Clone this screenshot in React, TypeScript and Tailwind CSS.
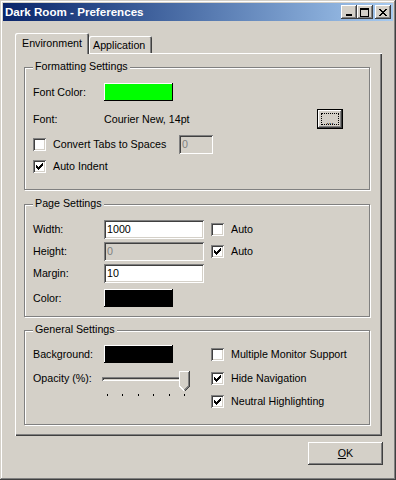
import type { ReactNode } from 'react';

// classic win2k bevels
const raised = 'shadow-[inset_-1px_-1px_#404040,inset_1px_1px_#ffffff,inset_-2px_-2px_#808080,inset_2px_2px_#d4d0c8]';
const sunken = 'shadow-[inset_1px_1px_#808080,inset_-1px_-1px_#ffffff,inset_2px_2px_#404040,inset_-2px_-2px_#d4d0c8]';

function Px({ rows, w, h }: { rows: number[][][]; w: number; h: number }) {
  // rows[y] = list of [x0, x1] runs
  return (
    <svg width={w} height={h} viewBox={`0 0 ${w} ${h}`} shapeRendering="crispEdges">
      {rows.map((runs, y) =>
        runs.map(([a, b], i) => <rect key={`${y}-${i}`} x={a} y={y} width={b - a + 1} height={1} fill="#000" />)
      )}
    </svg>
  );
}

const CHECK = [[[6, 6]], [[5, 6]], [[0, 0], [4, 6]], [[0, 1], [3, 5]], [[0, 4]], [[1, 3]], [[2, 2]]];
const CLOSE = [[[0, 1], [6, 7]], [[1, 2], [5, 6]], [[2, 5]], [[3, 4]], [[2, 5]], [[1, 2], [5, 6]], [[0, 1], [6, 7]]];

function Check({ on }: { on?: boolean }) {
  return (
    <span className={`w-[13px] h-[13px] bg-white shrink-0 flex items-center justify-center ${sunken}`}>
      {on ? <Px rows={CHECK} w={7} h={7} /> : null}
    </span>
  );
}

function CheckRow({ on, label, className = '' }: { on?: boolean; label: string; className?: string }) {
  return (
    <div className={`flex items-center h-[13px] ${className}`}>
      <Check on={on} />
      <span className="ml-[7px] leading-none whitespace-nowrap">{label}</span>
    </div>
  );
}

function TextBox({ value, disabled, w }: { value: string; disabled?: boolean; w: string }) {
  return (
    <div
      className={`${w} h-[19px] shrink-0 flex items-center pl-[3px] ${sunken} ${
        disabled ? 'bg-[#d4d0c8] text-[#808080]' : 'bg-white text-black'
      }`}
    >
      {value}
    </div>
  );
}

function Swatch({ color }: { color: string }) {
  return (
    <div
      className={`w-[69px] h-[18px] shrink-0 ${color} shadow-[inset_-1px_-1px_#000000,inset_1px_1px_#ffffff]`}
    />
  );
}

function Label({ children, w = 'w-[71px]' }: { children: ReactNode; w?: string }) {
  return <span className={`${w} shrink-0 leading-none whitespace-nowrap`}>{children}</span>;
}

function Group({ title, h, className = '', children }: { title: string; h: string; className?: string; children: ReactNode }) {
  return (
    <div
      className={`relative w-[346px] ${h} border border-[#808080] shadow-[inset_1px_1px_#ffffff,1px_1px_#ffffff] pl-[8px] ${className}`}
    >
      <span className="absolute -top-[7px] left-[8px] px-[2px] bg-[#d4d0c8] leading-none">{title}</span>
      {children}
    </div>
  );
}

function CapButton({ children }: { children: ReactNode }) {
  return <div className={`w-[16px] h-[14px] bg-[#d4d0c8] flex items-center justify-center ${raised}`}>{children}</div>;
}

function Slider() {
  return (
    <div className="relative w-[89px] h-[26px]">
      <div className={`mt-[6px] h-[4px] w-[86px] ${sunken}`} />
      <div className="mt-[13px] flex justify-between pl-[5px] pr-[6px]">
        {[0, 1, 2, 3, 4, 5].map((i) => (
          <span key={i} className="w-px h-[2px] bg-black" />
        ))}
      </div>
      <svg className="absolute top-0 left-[77px]" width="11" height="21" viewBox="0 0 11 21" shapeRendering="crispEdges">
        <path d="M0 0 H10 V15 L5 20 L0 15 Z" fill="#d4d0c8" />
        <path d="M0.5 15 V0.5 H9.5" stroke="#fff" fill="none" />
        <path d="M0.5 15 L5 19.5" stroke="#fff" fill="none" />
        <path d="M10.5 0 V15 L5.5 20.5" stroke="#404040" fill="none" />
        <path d="M9.5 1 V15 L5.5 19" stroke="#808080" fill="none" />
      </svg>
    </div>
  );
}

export default function App() {
  return (
    <div className="w-[396px] h-[480px] bg-[#d4d0c8] p-[3px] flex flex-col text-[10.7px] text-black font-['Liberation_Sans',Arial,sans-serif] shadow-[inset_-1px_-1px_#404040,inset_1px_1px_#d4d0c8,inset_-2px_-2px_#808080,inset_2px_2px_#ffffff]">
      {/* title bar */}
      <div className="h-[18px] shrink-0 flex items-center pl-[2px] pr-[2px] bg-linear-to-r from-[#0a246a] to-[#a6caf0]">
        <span className="text-white font-bold text-[11.6px] leading-none">Dark Room - Preferences</span>
        <div className="ml-auto flex items-center">
          <CapButton>
            <svg width="6" height="2" className="mt-[6px] -ml-[1px]"><rect width="6" height="2" fill="#000" /></svg>
          </CapButton>
          <CapButton>
            <svg width="9" height="9" className="-ml-[1px]" shapeRendering="crispEdges">
              <rect x="0" y="0" width="9" height="2" fill="#000" />
              <rect x="0" y="0" width="1" height="9" fill="#000" />
              <rect x="8" y="0" width="1" height="9" fill="#000" />
              <rect x="0" y="8" width="9" height="1" fill="#000" />
            </svg>
          </CapButton>
          <div className="ml-[2px]">
            <CapButton>
              <Px rows={CLOSE} w={8} h={7} />
            </CapButton>
          </div>
        </div>
      </div>

      <div className="pl-[12px] pt-[12px] flex flex-col w-[379px]">
        {/* tabs */}
        <div className="flex items-end h-[20px]">
          <div className="relative z-10 w-[74px] h-[21px] -mb-px bg-[#d4d0c8] rounded-t-[2px] pl-[7px] pt-[5px] leading-none shadow-[inset_1px_1px_#ffffff,inset_-1px_0_#404040,inset_-2px_0_#808080]">
            Environment
          </div>
          <div className="w-[63px] h-[17px] bg-[#d4d0c8] rounded-t-[2px] pl-[4px] pt-[4px] leading-none shadow-[inset_1px_1px_#ffffff,inset_-1px_0_#404040,inset_-2px_0_#808080]">
            Application
          </div>
        </div>

        {/* panel */}
        <div className="w-[367px] h-[383px] pl-[9px] pt-[14px] shadow-[inset_1px_1px_#ffffff,inset_-1px_-1px_#404040,inset_-2px_-2px_#808080]">
          <Group title="Formatting Settings" h="h-[123px]" className="pt-[15px]">
            <div className="flex items-center h-[18px]">
              <Label>Font Color:</Label>
              <Swatch color="bg-[#00ff00]" />
            </div>
            <div className="flex items-center h-[20px] mt-[8px]">
              <Label>Font:</Label>
              <span className="w-[213px] shrink-0 leading-none">Courier New, 14pt</span>
              <div className="w-[26px] h-[20px] border border-black">
                <div className={`w-full h-full p-[3px] ${raised}`}>
                  <div className="w-full h-full border border-dotted border-black flex items-end justify-center text-[9px] leading-[6px]">
                    ...
                  </div>
                </div>
              </div>
            </div>
            <div className="flex items-center h-[19px] mt-[6px]">
              <Check />
              <span className="ml-[7px] w-[126px] shrink-0 leading-none whitespace-nowrap">Convert Tabs to Spaces</span>
              <TextBox value="0" disabled w="w-[34px]" />
            </div>
            <CheckRow on label="Auto Indent" className="mt-[6px]" />
          </Group>

          <Group title="Page Settings" h="h-[113px]" className="mt-[14px] pt-[15px]">
            <div className="flex items-center h-[19px]">
              <Label>Width:</Label>
              <TextBox value="1000" w="w-[100px]" />
              <CheckRow label="Auto" className="ml-[7px]" />
            </div>
            <div className="flex items-center h-[19px] mt-[3px]">
              <Label>Height:</Label>
              <TextBox value="0" disabled w="w-[100px]" />
              <CheckRow on label="Auto" className="ml-[7px]" />
            </div>
            <div className="flex items-center h-[19px] mt-[3px]">
              <Label>Margin:</Label>
              <TextBox value="10" w="w-[100px]" />
            </div>
            <div className="flex items-center h-[18px] mt-[6px]">
              <Label>Color:</Label>
              <Swatch color="bg-black" />
            </div>
          </Group>

          <Group title="General Settings" h="h-[95px]" className="mt-[13px] flex">
            <div className="w-[178px] shrink-0 pt-[14px]">
              <div className="flex items-center h-[18px]">
                <Label>Background:</Label>
                <Swatch color="bg-black" />
              </div>
              <div className="flex mt-[8px]">
                <span className="w-[69px] shrink-0 leading-none mt-[2px] whitespace-nowrap">Opacity (%):</span>
                <Slider />
              </div>
            </div>
            <div className="pt-[17px] flex flex-col">
              <CheckRow label="Multiple Monitor Support" />
              <CheckRow on label="Hide Navigation" className="mt-[11px]" />
              <CheckRow on label="Neutral Highlighting" className="mt-[10px]" />
            </div>
          </Group>
        </div>

        <div className={`self-end mr-[-1px] mt-[6px] w-[75px] h-[23px] flex items-center justify-center ${raised}`}>
          <span>
            <span className="underline">O</span>K
          </span>
        </div>
      </div>
    </div>
  );
}
